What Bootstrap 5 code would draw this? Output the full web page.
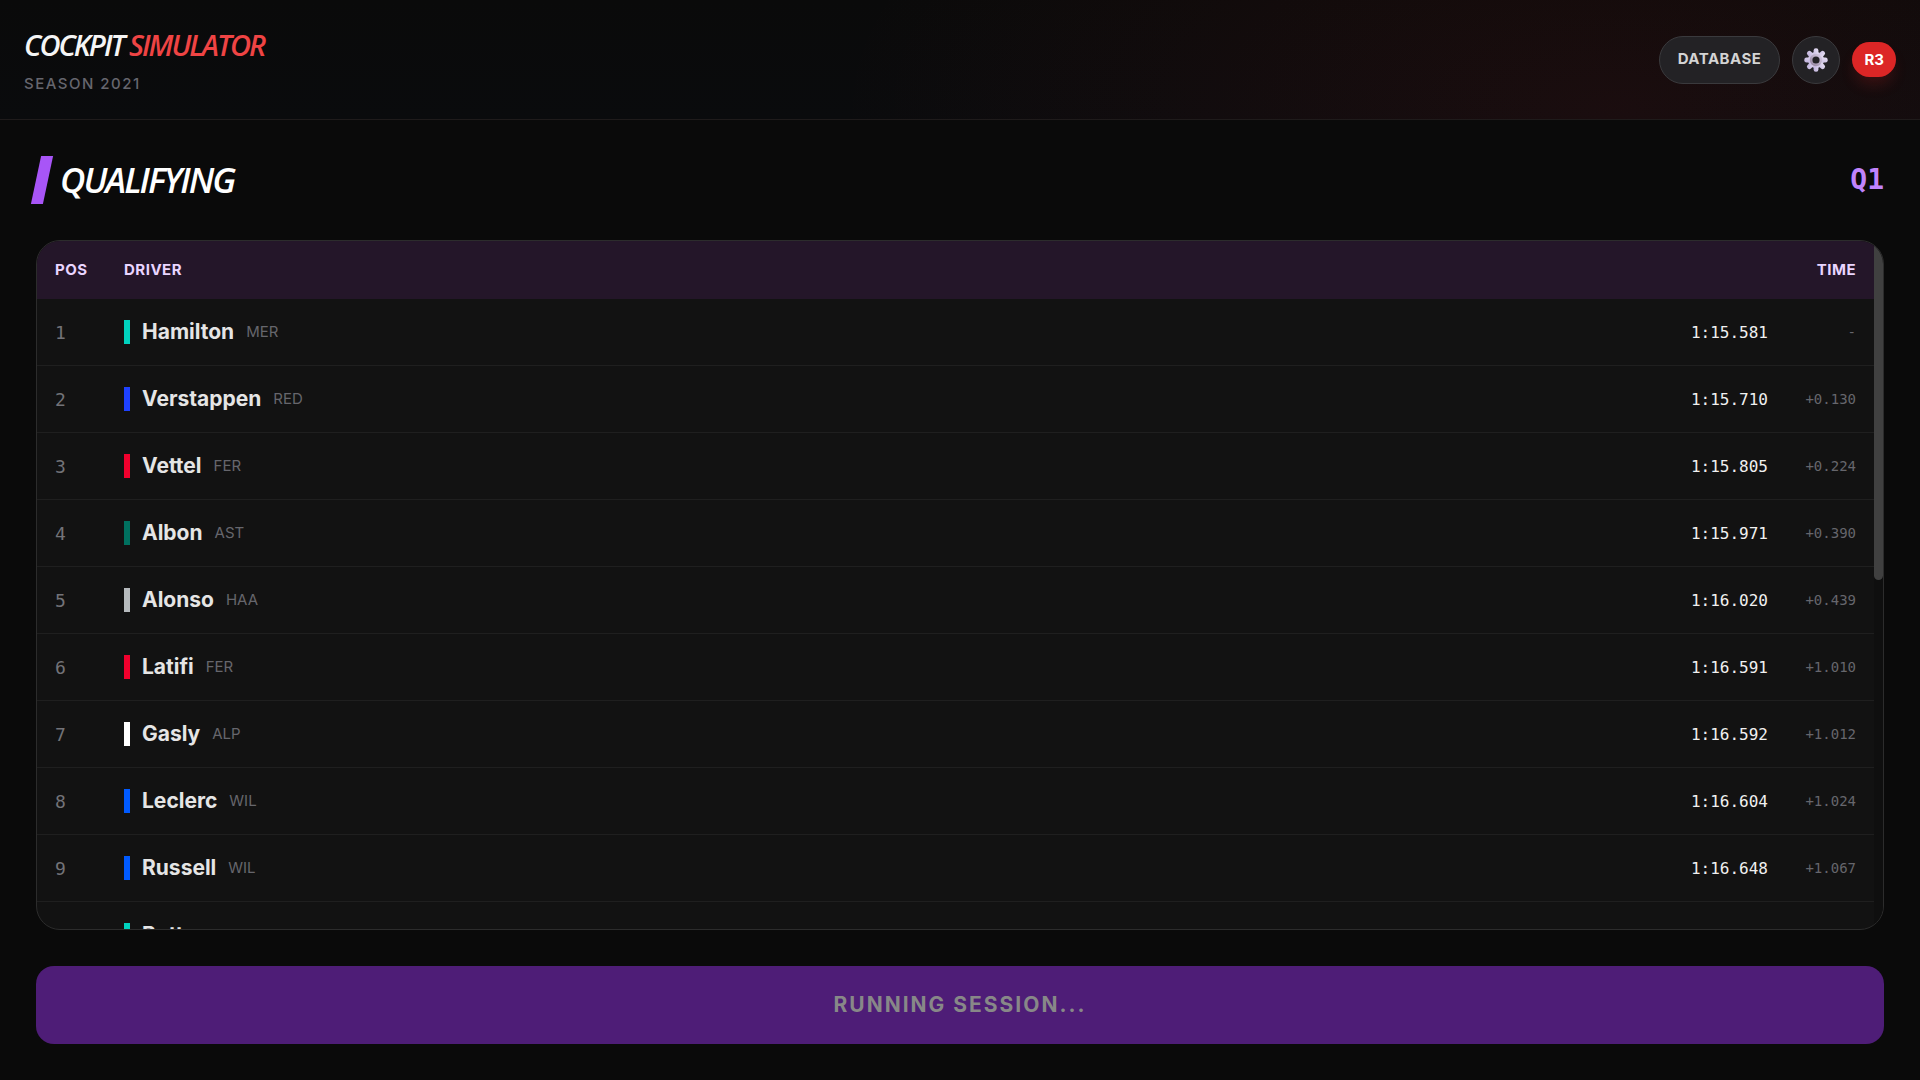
<!DOCTYPE html>
<html lang="en">
<head>
<meta charset="utf-8">
<meta name="viewport" content="width=device-width, initial-scale=1">
<title>Cockpit Simulator</title>
<link href="https://cdn.jsdelivr.net/npm/bootstrap@5.3.0/dist/css/bootstrap.min.css" rel="stylesheet">
<style>
  body { background: #0a0a0a; color: #e5e5e5; font-family: Inter, "Liberation Sans", sans-serif; }

  .topbar { padding: 23px 24px; border-bottom: 1px solid #1f1b1b;
    background: radial-gradient(ellipse 780px 360px at 84% 90%, rgba(220,38,38,.08), transparent), linear-gradient(#0a0a0a, #0a0b0d); }
  .brand { font: italic 600 29px/44px "Open Sans", sans-serif; letter-spacing: -2px; color: #f5f5f5; }
  .brand span { color: #ef4444; }
  .season { font-size: 15px; line-height: 25px; letter-spacing: 1.5px; color: #66666e; font-weight: 500; }
  .tools { gap: 12px; }
  .pill-btn { height: 48px; border: 1px solid #3a3a3d; background: #232225; color: #d4d4d4; font-size: 15px; font-weight: 700; }
  .db-btn { padding: 0 18px; letter-spacing: 0.5px; }
  .gear-btn { width: 48px; }
  .round-tag { padding: 6px 12px; line-height: 23px; font-size: 15px; font-weight: 700; background: #dc2626; color: #fff; box-shadow: 0 10px 15px -3px rgba(220,38,38,.2); }

  main { padding: 36px; gap: 36px; min-height: 0; }
  .slash { width: 12px; height: 48px; background: #a855f7; transform: skewX(-12deg); }
  .stage-title { font: italic 600 35px/48px "Open Sans", sans-serif; letter-spacing: -2px; color: #fff; }
  .stage-head > div { gap: 12px; }
  .stage-part { font: 700 28px/48px "DejaVu Sans Mono", monospace; color: #c084fc; }

  .board { border: 1px solid #2c2c2c; border-radius: 24px; background: #121212; min-height: 0; }
  .rail { width: 9px; background: #0f0f0f; }
  .rail-thumb { height: 49.3%; background: #404040; border-radius: 5px; }
  .times { border-collapse: separate; border-spacing: 0; }
  .times th { height: 58px; padding: 0 18px; background: #241629; color: #e9d5ff; font-size: 15px; font-weight: 700; letter-spacing: 0.5px; }
  .times td { height: 67px; padding: 0 18px; border-bottom: 1px solid #1f1f1f; }
  .times .pos-col { width: 87px; padding-right: 0; }
  .times .drv-col { padding-left: 0; }
  .times .pos { font: 18px "DejaVu Sans Mono", monospace; color: #737378; }
  .driver { gap: 12px; }
  .driver b { font-size: 21px; font-weight: 700; }
  .driver abbr { font-size: 15px; color: #66666c; }
  .team { width: 6px; height: 24px; }
  .mer { background: #00d2be; } .red { background: #1e41ff; } .fer { background: #f0002d; } .ast { background: #00705f; }
  .haa { background: #b6babd; } .alp { background: #fff; } .wil { background: #005aff; }
  .times .lap { font: 16px "DejaVu Sans Mono", monospace; color: #f0f0f0; padding: 0; }
  .times .behind { width: 106px; font: 14px "DejaVu Sans Mono", monospace; color: #66666c; }

  .run-btn { height: 78px; border: 0; border-radius: 18px; background: #4e1d77; color: #888; font-size: 21px; font-weight: 700; letter-spacing: 2px; }
</style>
</head>
<body class="vh-100 d-flex flex-column overflow-hidden">
<header class="topbar d-flex align-items-center justify-content-between flex-shrink-0">
  <div>
    <h1 class="brand mb-1">COCKPIT <span>SIMULATOR</span></h1>
    <div class="season">SEASON 2021</div>
  </div>
  <div class="tools d-flex align-items-center">
    <button type="button" class="pill-btn db-btn rounded-pill">DATABASE</button>
    <button type="button" class="pill-btn gear-btn rounded-circle p-0 d-flex align-items-center justify-content-center" aria-label="Settings">
      <svg width="24" height="24" viewBox="0 0 24 24" aria-hidden="true">
        <defs>
          <linearGradient id="metal" x1="1" y1="0" x2="0" y2="1"><stop offset="0" stop-color="#e6dff2"/><stop offset="1" stop-color="#c0b2dc"/></linearGradient>
          <linearGradient id="ring" x1="1" y1="0" x2="0" y2="1"><stop offset="0" stop-color="#d6cbe4"/><stop offset="1" stop-color="#95859f"/></linearGradient>
        </defs>
        <g fill="url(#metal)">
          <circle cx="12" cy="12" r="8"/>
          <g id="teeth">
            <rect x="9.6" y="0.3" width="4.8" height="23.4" rx="2.2"/>
            <rect x="0.3" y="9.6" width="23.4" height="4.8" rx="2.2"/>
          </g>
          <use href="#teeth" transform="rotate(45 12 12)"/>
        </g>
        <circle cx="12" cy="12" r="4.9" fill="#232225" stroke="url(#ring)" stroke-width="2.6"/>
      </svg>
    </button>
    <span class="round-tag rounded-pill">R3</span>
  </div>
</header>

<main class="flex-grow-1 d-flex flex-column">
  <div class="stage-head d-flex align-items-center justify-content-between">
    <div class="d-flex align-items-center">
      <span class="slash"></span>
      <h2 class="stage-title mb-0">QUALIFYING</h2>
    </div>
    <div class="stage-part">Q1</div>
  </div>

  <div class="board flex-grow-1 d-flex overflow-hidden">
    <div class="flex-grow-1 overflow-hidden">
    <table class="times w-100">
      <thead>
        <tr><th class="pos-col" scope="col">POS</th><th class="drv-col" scope="col">DRIVER</th><th class="text-end" colspan="2" scope="col">TIME</th></tr>
      </thead>
      <tbody>
        <tr><td class="pos">1</td><td class="drv-col"><div class="driver d-flex align-items-center"><span class="team mer"></span><b>Hamilton</b><abbr>MER</abbr></div></td><td class="lap text-end">1:15.581</td><td class="behind text-end">-</td></tr>
        <tr><td class="pos">2</td><td class="drv-col"><div class="driver d-flex align-items-center"><span class="team red"></span><b>Verstappen</b><abbr>RED</abbr></div></td><td class="lap text-end">1:15.710</td><td class="behind text-end">+0.130</td></tr>
        <tr><td class="pos">3</td><td class="drv-col"><div class="driver d-flex align-items-center"><span class="team fer"></span><b>Vettel</b><abbr>FER</abbr></div></td><td class="lap text-end">1:15.805</td><td class="behind text-end">+0.224</td></tr>
        <tr><td class="pos">4</td><td class="drv-col"><div class="driver d-flex align-items-center"><span class="team ast"></span><b>Albon</b><abbr>AST</abbr></div></td><td class="lap text-end">1:15.971</td><td class="behind text-end">+0.390</td></tr>
        <tr><td class="pos">5</td><td class="drv-col"><div class="driver d-flex align-items-center"><span class="team haa"></span><b>Alonso</b><abbr>HAA</abbr></div></td><td class="lap text-end">1:16.020</td><td class="behind text-end">+0.439</td></tr>
        <tr><td class="pos">6</td><td class="drv-col"><div class="driver d-flex align-items-center"><span class="team fer"></span><b>Latifi</b><abbr>FER</abbr></div></td><td class="lap text-end">1:16.591</td><td class="behind text-end">+1.010</td></tr>
        <tr><td class="pos">7</td><td class="drv-col"><div class="driver d-flex align-items-center"><span class="team alp"></span><b>Gasly</b><abbr>ALP</abbr></div></td><td class="lap text-end">1:16.592</td><td class="behind text-end">+1.012</td></tr>
        <tr><td class="pos">8</td><td class="drv-col"><div class="driver d-flex align-items-center"><span class="team wil"></span><b>Leclerc</b><abbr>WIL</abbr></div></td><td class="lap text-end">1:16.604</td><td class="behind text-end">+1.024</td></tr>
        <tr><td class="pos">9</td><td class="drv-col"><div class="driver d-flex align-items-center"><span class="team wil"></span><b>Russell</b><abbr>WIL</abbr></div></td><td class="lap text-end">1:16.648</td><td class="behind text-end">+1.067</td></tr>
        <tr><td class="pos"></td><td class="drv-col"><div class="driver d-flex align-items-center"><span class="team mer"></span><b>Bottas</b></div></td><td class="lap"></td><td class="behind"></td></tr>
      </tbody>
    </table>
    </div>
    <div class="rail flex-shrink-0"><div class="rail-thumb"></div></div>
  </div>

  <button type="button" class="run-btn w-100 flex-shrink-0" disabled>RUNNING SESSION...</button>
</main>
<script src="https://cdn.jsdelivr.net/npm/bootstrap@5.3.0/dist/js/bootstrap.bundle.min.js"></script>
</body>
</html>
